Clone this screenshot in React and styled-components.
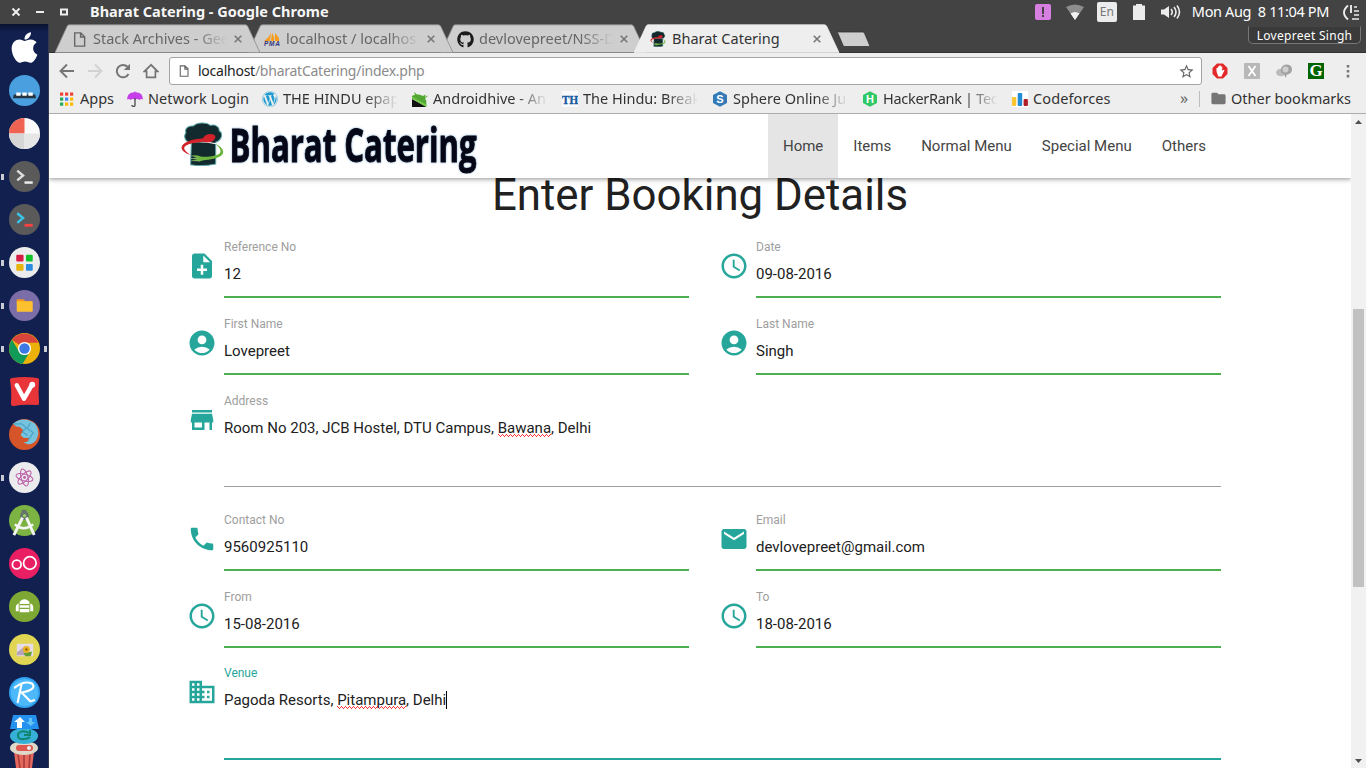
import React from 'react';
import styled, { createGlobalStyle, css } from 'styled-components';
import { MdNoteAdd, MdAccessTime, MdAccountCircle, MdStore, MdPhone, MdEmail, MdBusiness, MdStarBorder, MdFolder } from 'react-icons/md';
import { FaApple, FaWordpress, FaGithub } from 'react-icons/fa';

const GlobalStyle = createGlobalStyle`
  * { box-sizing: border-box; }
  html, body { margin: 0; height: 100%; overflow: hidden; }
  body { font-family: "Noto Sans", "Open Sans", sans-serif; background: #fff; }
  #root { height: 768px; }
  svg { display: block; flex: none; }
`;

const Desktop = styled.div`
  width: 1366px; height: 768px; overflow: hidden;
  display: flex; flex-direction: column;
`;
const Label = styled.span`
  white-space: pre;
  letter-spacing: ${p => p.$ls || 0}px;
`;

/* ---------- top panel ---------- */
const Panel = styled.header`
  height: 24px; flex: none; background: #434343; color: #fff;
  display: flex; align-items: center; justify-content: space-between;
  padding: 0 6px 0 11px; font-size: 14.5px;
`;
const PanelSide = styled.div`display: flex; align-items: center; height: 24px;`;
const WindowTitle = styled(Label)`font-weight: 700; margin: -2px 0 0 21px; font-size: 14.5px; line-height: 24px; color: #f6f6f6;`;
const LangBadge = styled.span`
  width: 20px; height: 20px; border-radius: 2px; background: #ececec; color: #777;
  font-size: 12px; line-height: 20px; text-align: center; margin: 0 16px 0 13px;
`;
const Clock = styled(Label)`margin: -2px 14px 0 11px; line-height: 24px;`;

/* ---------- launcher ---------- */
const Workspace = styled.div`flex: 1; min-height: 0; display: flex;`;
const Launcher = styled.nav`
  width: 49px; flex: none; padding-top: 2px; border-right: 1px solid #33374f;
  background: linear-gradient(#0a1230 0, #11204f 8px, #11204f 100%);
  display: flex; flex-direction: column;
`;
const LauncherItem = styled.div`
  height: 43px; flex: none; display: flex; align-items: center;
  padding-left: 1px;
`;
const Pip = styled.i`
  width: 3px; height: 6px; margin-right: 5px;
  background: ${p => (p.$on ? '#c9cbd3' : 'transparent')};
  & + svg + & { margin: 0 0 0 4px; }
`;
const Stack = styled.div`padding: 0 0 0 9px;`;

/* ---------- browser ---------- */
const Browser = styled.main`flex: 1; min-width: 0; display: flex; flex-direction: column;`;
const TabStrip = styled.div`
  height: 29px; flex: none; background: #434343; display: flex; padding-left: 6px;
  box-shadow: inset 0 -1px #333;
`;
const TabBox = styled.div`
  width: 206px; height: 29px; flex: none; margin-right: -13px;
  display: grid; grid-template-columns: 206px; position: relative;
  z-index: ${p => (p.$active ? 5 : p.$z)};
  & > * { grid-area: 1 / 1; }
`;
const TabContent = styled.div`
  display: flex; align-items: center; padding: 1px 16px 0 15px; gap: 5px; font-size: 14.5px;
  color: ${p => (p.$active ? '#333' : '#666')};
`;
const IconSlot = styled.span`width: 18px; display: flex; justify-content: center; flex: none;`;
const fade = css`
  mask-image: linear-gradient(to right, #000 calc(100% - 32px), transparent);
`;
const TabTitle = styled(Label)`
  width: 134px; margin: -2px 2px 0 0; overflow: hidden; line-height: 26px;
  ${p => !p.$active && fade}
`;
const UserBadge = styled.div`
  width: 113px; height: 18px; margin: 2px 5px 0 auto; border: 1px solid #777; border-top-color: #444;
  border-radius: 0 0 5px 5px; background: #3a3a3a; color: #fff; font-size: 12px; letter-spacing: .3px; line-height: 17px; text-align: center; white-space: nowrap;
`;
const NewTab = styled.div`margin: 7px 0 0 8px;`;

const Toolbar = styled.div`
  height: 35px; flex: none; background: #eee; display: flex; align-items: center; padding: 1px 10px 0 10px;
`;
const ToolbarIcons = styled.div`display: flex; gap: 12px; align-items: center; width: 110px;`;
const AddressBar = styled.div`
  width: 1033px; height: 28px; background: #fff; border: 1px solid #a3a3a3; border-radius: 3px; flex: none;
  display: flex; align-items: center; padding: 0 6px 0 9px; font-size: 14px; color: #222;
`;
const Url = styled(Label)`margin: -2px 0 0 9px; flex: 1; span { color: #8b8b8b; }`;
const Extensions = styled.div`display: flex; align-items: center; margin-left: 10px; gap: 16px; flex: 1;`;
const GreenG = styled.span`
  width: 16px; height: 16px; background: #006400; color: #fff; font: 700 17px/16px "Liberation Serif", serif; text-align: center; overflow: hidden;
`;

const BookmarksBar = styled.div`
  height: 26px; flex: none; background: #eee; border-bottom: 1px solid #acacac;
  display: flex; align-items: center; padding: 0 15px 4px 10px; font-size: 14.5px; color: #333;
`;
const Bookmark = styled.div`
  width: ${p => p.$w}px; flex: none; display: flex; align-items: center; gap: 5px; overflow: hidden; height: 22px;
`;
const BookmarkText = styled(Label)`
  line-height: 22px; margin-top: -2px; overflow: hidden; max-width: 116px;
  ${p => p.$cut && css`width: 115px; ${fade}`}
`;
const OtherMarks = styled.div`
  margin-left: auto; display: flex; align-items: center; height: 16px; border-left: 1px solid #bdbdbd; padding-left: 10px; gap: 4px;
  & > span { margin-top: -2px; }
`;
const Chevrons = styled.span`font-size: 16px; line-height: 18px; color: #666; margin: -2px 0 0 2px;`;

/* ---------- web page ---------- */
const Viewport = styled.div`flex: 1; min-height: 0; display: flex;`;
const Page = styled.div`
  flex: 1; background: #fff; overflow: hidden; font-family: Roboto, sans-serif; color: #212121;
  display: flex; flex-direction: column;
`;
const NavBar = styled.div`
  height: 64px; flex: none; padding: 0 130px 0 132px; background: #fff; display: flex; justify-content: space-between;
  box-shadow: 0 2px 5px rgba(0,0,0,.22), 0 1px 3px rgba(0,0,0,.18); position: relative; z-index: 2;
`;
const Brand = styled.div`display: flex; align-items: flex-start; padding-top: 8px;`;
const Wordmark = styled.text`
  font: 700 46px "Open Sans", sans-serif; fill: #050716; stroke: #050716; stroke-width: .9px;
  filter: drop-shadow(0 0 .8px #7fa9cc);
`;
const Menu = styled.div`display: flex; font-size: 15px; line-height: 64px; color: #444;`;
const MenuItem = styled.a`padding: 0 15px; background: ${p => (p.$active ? '#e5e5e5' : 'none')};`;
const Heading = styled.h3`
  margin: -12px 0 0; font-size: 43.8px; font-weight: 400; line-height: 58px; height: 72px; text-align: center; flex: none;
`;
const Form = styled.form`padding: 0 130px 0 138px;`;
const FormRow = styled.div`display: flex; gap: 30px; height: ${p => p.$h}px;`;
const Field = styled.div`flex: 1; display: flex; color: #26a69a; padding-top: 13px; svg { margin-right: 7px; }`;
const FieldBody = styled.div`
  flex: 1; height: ${p => p.$h}px; margin-top: -11px; display: flex; flex-direction: column;
  border-bottom: ${p => (p.$line)};
`;
const FieldLabel = styled.label`font-size: 12px; line-height: 14px; color: ${p => (p.$focus ? '#26a69a' : '#9e9e9e')};`;
const FieldValue = styled.div`font-size: 15px; line-height: 20px; margin-top: 10px; color: #212121; display: flex; white-space: pre;`;
const Misspelt = styled.span`
  background:
    linear-gradient(90deg, #f33 1px, transparent 1px) 0 16px / 4px 1px repeat-x,
    linear-gradient(90deg, transparent 1px, #f33 1px 2px, transparent 2px 3px, #f33 3px) 0 17px / 4px 1px repeat-x,
    linear-gradient(90deg, transparent 2px, #f33 2px 3px, transparent 3px) 0 18px / 4px 1px repeat-x;
`;
const Caret = styled.i`width: 1px; height: 18px; background: #000; margin-top: 1px;`;

const ScrollTrack = styled.div`
  width: 15px; background: #f1f1f1; display: flex; flex-direction: column; align-items: center; justify-content: space-between;
  padding: 6px 0 5px;
`;
const ScrollThumb = styled.div`width: 11px; height: 278px; background: #c1c1c1;`;
const ThumbArea = styled.div`flex: 1; padding-top: 185px;`;

const ChefHat = ({ w, h }) => (
  <svg width={w} height={h} viewBox="36 28 126 130">
    <path d="M66 90C48 88 42 70 50 60 46 48 56 38 72 40 82 28 112 28 122 38 138 34 150 44 148 54 160 60 158 80 138 88L138 152Q100 160 64 154Z" fill="#12292d" stroke="#5aa5a5" strokeWidth="3" />
    <path d="M62 88Q100 84 140 92" fill="none" stroke="#fff" strokeWidth="3" />
    <path d="M137 70C132 60 108 60 100 76 70 78 38 88 37 104 38 114 52 122 66 126 52 118 44 110 45 103 50 92 76 88 102 86 118 92 138 84 137 70Z" fill="#d3222a" />
    <path d="M138 94C156 100 168 116 154 128 138 140 112 138 92 144L66 142 84 137 64 136 84 132 66 128Q80 124 94 130C118 132 142 128 150 120 156 112 148 102 138 94Z" fill="#6db33f" />
    <path d="M66 128 84 132M64 136H84M66 142 92 144" stroke="#d6efc4" strokeWidth="1" />
  </svg>
);

const Glyph = ({ w = 16, h = 16, box = '0 0 16 16', children }) => <svg width={w} height={h} viewBox={box}>{children}</svg>;
const PageIcon = ({ w = 12, h = 14 }) => (
  <Glyph w={w} h={h} box="0 0 12 14"><path d="M1.5.8h5.700l3.600 3.600v8.800H1.500ZM7 1v3.700h3.700" fill="none" stroke="#666" strokeWidth="1.3" /></Glyph>
);
const PmaIcon = () => (
  <Glyph w={18} h={16} box="0 0 18 16">
    <path d="M8 1 7 10H1Q7 6 8 1Zm1 1q3 4 2 8H8Zm3 0q5 5 4 8h-4Z" fill="#f89c1c" />
    <text x="1" y="15" fontSize="6.5" fontWeight="700" fontStyle="italic" fontFamily="Liberation Sans" fill="#35357a" textLength="16">PMA</text>
  </Glyph>
);

const tabs = [
  { title: 'Stack Archives - Gee', icon: <PageIcon w={13} h={15} /> },
  { title: 'localhost / localhos', icon: <PmaIcon /> },
  { title: 'devlovepreet/NSS-D', icon: <FaGithub size={17} color="#1b1b1b" /> },
  { title: 'Bharat Catering', icon: <ChefHat w={16} h={16} />, active: true },
];

const Tab = ({ tab, index }) => (
  <TabBox $active={tab.active} $z={4 - index}>
    <Glyph w={206} h={29} box="0 0 206 29">
      <path d="M0 28.600 12 2.500Q12.800 .8 14 .8H190.500Q192 .8 192.800 2.500L205 28.600Z" fill={tab.active ? '#eee' : '#cecece'} stroke={tab.active ? '#eee' : '#8b8b8b'} strokeWidth=".8" />
    </Glyph>
    <TabContent $active={tab.active}>
      <IconSlot>{tab.icon}</IconSlot>
      <TabTitle $active={tab.active}>{tab.title}</TabTitle>
      <Glyph w={8} h={8} box="0 0 8 8"><path d="M.7.7 7.300 7.300M7.300.7.7 7.300" stroke="#777" strokeWidth="1.6" /></Glyph>
    </TabContent>
  </TabBox>
);

const Hex = ({ color, letter }) => (
  <Glyph>
    <path d="M8 .3 15 4v8L8 15.7 1 12V4Z" fill={color} />
    <text x="8" y="12" fontSize="11" fontWeight="700" textAnchor="middle" fill="#fff" fontFamily="Liberation Sans">{letter}</text>
  </Glyph>
);
const appColors = ['#e43', '#e43', '#e43', '#2a5', '#48e', '#fb0', '#2a5', '#fb0', '#fb0'];
const bookmarks = [
  { w: 68, text: 'Apps', icon: <Glyph>{appColors.map((c, i) => <rect key={i} x={1 + (i % 3) * 5} y={1.5 + Math.floor(i / 3) * 5} width="3.2" height="3.2" fill={c} />)}</Glyph> },
  { w: 135, text: 'Network Login', ls: 0.08, icon: <Glyph><path d="M0 8.500Q0 1.500 7.300 1.300L8 0l.7 1.300Q16 1.500 16 8.500 14.500 7.300 12.500 9 10 7 8 9 6 7 3.500 9 1.500 7.300 0 8.500Z" fill="#c63ee8" /><path d="M8 7v7q0 1.500-1.500 1.500T5 14" fill="none" stroke="#555" strokeWidth="1.400" /></Glyph> },
  { w: 150, text: 'THE HINDU epap', cut: true, icon: <FaWordpress size={16} color="#1c9bd0" /> },
  { w: 150, text: 'Androidhive - An', cut: true, icon: <Glyph><path d="M0 5Q1 4 3 4L2 1l3 2.500Q8 3 11 5l2.500-1.500L13 7q2 3 1.500 7L0 6Z" fill="#52a832" /><path d="M0 8v8h14.500Z" fill="#111" /><path d="m0 6.500 14.500 8.500" stroke="#6bc73e" strokeWidth="2" /><path d="M15.500 5l-3 2" stroke="#52a832" /></Glyph> },
  { w: 150, text: 'The Hindu: Break', cut: true, icon: <Glyph><rect width="16" height="16" fill="#fafafa" /><text x="0" y="12.500" fontSize="13" fontWeight="700" textLength="16" lengthAdjust="spacingAndGlyphs" fill="#1659a0" stroke="#1659a0" strokeWidth=".4" fontFamily="Liberation Serif">TH</text></Glyph> },
  { w: 150, text: 'Sphere Online Ju', cut: true, icon: <Hex color="#337ab7" letter="S" /> },
  { w: 150, text: 'HackerRank | Tec', ls: -0.3, cut: true, icon: <Hex color="#2ec866" letter="H" /> },
  { w: 166, text: 'Codeforces', ls: 0.1, icon: <Glyph><rect width="16" height="16" fill="#fff" /><rect y="6" width="4.300" height="9" rx="1" fill="#fbc531" /><rect x="5.700" y="2" width="4.500" height="13" rx="1" fill="#1f8dd6" /><rect x="11.600" y="8" width="4.300" height="7" rx="1" fill="#b01e28" /></Glyph> },
];

const Disc = ({ fill, children }) => (
  <Glyph w={31} h={31} box="0 0 32 32"><circle cx="16" cy="16" r="16" fill={fill} />{children}</Glyph>
);
const launcherIcons = [
  { icon: <Glyph w={31} h={31} box="0 0 31 31"><FaApple x={-2} y={-2} size={35} color="#fff" /></Glyph> },
  { icon: <Disc fill="#4aa0de"><path d="M5 20h22l1 4H4Z" fill="#263442" /><path d="M7.500 18h4.500v3.500H7.500ZM13.800 18h4.500v3.500h-4.500ZM20 18h4.500v3.500H20Z" fill="#fff" /></Disc> },
  { icon: <Disc fill="#fafafa"><path d="M16 16V0A16 16 0 0 0 0 16Z" fill="#ee6352" /><path d="M16 16v16A16 16 0 0 1 0 16Z" fill="#d6d6d6" /><path d="M16 16v16a16 16 0 0 0 16-16Z" fill="#e6e6e6" /></Disc> },
  { on: true, icon: <Disc fill="#5a5a5a"><path d="m8.500 10 6 5-6 5" fill="none" stroke="#ddd" strokeWidth="2.500" /><path d="M16 21h8.500v2.500H16Z" fill="#eee" /></Disc> },
  { icon: <Disc fill="#5a5a5a"><path d="m8.500 9.500 6 5-6 5" fill="none" stroke="#3cc4e8" strokeWidth="2.500" /><path d="M16 20.500h8.500v3H16Z" fill="#f44141" /></Disc> },
  { on: true, icon: <Disc fill="#ececec"><rect x="7.500" y="8" width="7.500" height="7" rx="1" fill="#d81b43" /><rect x="17.500" y="8" width="7" height="7" rx="1" fill="#12c22b" /><rect x="7.500" y="17.500" width="7.500" height="7" rx="1" fill="#e5b50b" /><rect x="17.500" y="17.500" width="7" height="7" rx="1" fill="#2a8ce0" /></Disc> },
  { on: true, icon: <Disc fill="#7b6da8"><path d="M8 9.500h7l2 2h6.500V14H8Z" fill="#f8961e" /><rect x="8" y="11.500" width="16.500" height="11" rx="1" fill="#fdc12f" /></Disc> },
  { on: true, right: true, icon: <Disc fill="#ecb20a"><path d="M16 16 3 7A16 16 0 0 1 30.500 10H16Z" fill="#d9453a" /><path d="M3 7l8 13 9 2-6 10A16 16 0 0 1 3 7Z" fill="#129a58" /><circle cx="16" cy="16" r="6.800" fill="#fff" /><circle cx="16" cy="16" r="5.400" fill="#3c79e6" /></Disc> },
  { icon: <Glyph w={31} h={31} box="0 0 32 32"><path d="M3 2Q16 0 29 2 31 2 31 4 30 16 31 28q0 2-2 2-14-1-24 1-3 0-3-3Q3 15 1 4 1 2 3 2Z" fill="#e83539" /><path d="m8 9.500 7.500 14 8-14" fill="none" stroke="#fff" strokeWidth="4.500" strokeLinecap="round" strokeLinejoin="round" /><circle cx="24" cy="9" r="3" fill="#fff" /></Glyph> },
  { icon: <Disc fill="#d5542a"><path d="M4 5Q15-4 27 5 33 13 28 22 22 29 15 24 22 24 20 19 14 21 12 16L15 12Q11 7 8 8Z" fill="#75c3dc" /><path d="M5 5 13 5 18 9 14 13 19 17M22 4 19 10 25 14 20 22" fill="none" stroke="#4ba3c9" strokeWidth="1.200" /></Disc> },
  { on: true, icon: <Disc fill="#ececef"><g fill="none" stroke="#bc62a8" strokeWidth="1.100"><ellipse cx="16" cy="16" rx="9" ry="3.500" transform="rotate(15 16 16)" /><ellipse cx="16" cy="16" rx="9" ry="3.500" transform="rotate(75 16 16)" /><ellipse cx="16" cy="16" rx="9" ry="3.500" transform="rotate(135 16 16)" /></g><circle cx="16" cy="16" r="1.500" fill="#bc62a8" /></Disc> },
  { icon: <Disc fill="#7cb342"><path d="M13 5h5v3h-5Z" fill="#66756c" /><circle cx="16" cy="11" r="4.500" fill="#66756c" /><circle cx="16" cy="11" r="1.700" fill="#9ccc65" /><path d="M14 13 5 31M18 13l8 18" stroke="#f5f5f5" strokeWidth="3" /><path d="M6 20q9 8 19 0" fill="none" stroke="#f5f5f5" strokeWidth="2.500" /></Disc> },
  { icon: <Disc fill="#e91e63"><circle cx="8" cy="17" r="4.500" fill="none" stroke="#fff" strokeWidth="1.800" /><circle cx="21.500" cy="15.500" r="6.500" fill="none" stroke="#fff" strokeWidth="1.800" /></Disc> },
  { icon: <Disc fill="#7da834"><path d="M11 11q5-5 10 0v11H11Z" fill="#fff" /><path d="M10 13q-3 1-3 4v4h3ZM22 13q3 1 3 4v4h-3Z" fill="#fff" /><path d="M11 14h10M11 18h10" stroke="#7da834" strokeWidth="1.400" /></Disc> },
  { icon: <Disc fill="#e0d653"><rect x="8" y="10" width="17" height="13" rx="1" fill="#e6dce7" /><path d="m8 19 8-6 8 9H8Z" fill="#b8a4b8" /><path d="m15 20 9-2-2 5h-5Z" fill="#60a033" /><circle cx="18" cy="16" r="3.600" fill="#e9b51d" /><circle cx="18" cy="16" r="1.400" fill="#a25e11" /></Disc> },
  { icon: <Disc fill="#31a2f0"><circle cx="16" cy="16" r="14" fill="#4db8fa" /><path d="M13 7 9 26M6 11Q16 3 24 7 29 13 13 16L22 25 26 24" fill="none" stroke="#fff" strokeWidth="2.200" strokeLinecap="round" /></Disc> },
];

const Menus = ['Home', 'Items', 'Normal Menu', 'Special Menu', 'Others'];
const GREEN = '2px solid #4caf50';
const rows = [
  { h: 77, fields: [{ icon: MdNoteAdd, label: 'Reference No', value: '12' }, { icon: MdAccessTime, label: 'Date', value: '09-08-2016' }] },
  { h: 77, fields: [{ icon: MdAccountCircle, label: 'First Name', value: 'Lovepreet' }, { icon: MdAccountCircle, label: 'Last Name', value: 'Singh' }] },
  { h: 119, body: 93, line: '1px solid #9e9e9e', fields: [{ icon: MdStore, label: 'Address', value: <>Room No 203, JCB Hostel, DTU Campus, <Misspelt>Bawana</Misspelt>, Delhi</> }] },
  { h: 77, fields: [{ icon: MdPhone, label: 'Contact No', value: '9560925110' }, { icon: MdEmail, label: 'Email', value: 'devlovepreet@gmail.com' }] },
  { h: 76, fields: [{ icon: MdAccessTime, label: 'From', value: '15-08-2016' }, { icon: MdAccessTime, label: 'To', value: '18-08-2016' }] },
  { h: 110, body: 94, line: '2px solid #26a69a', fields: [{ icon: MdBusiness, label: 'Venue', focus: true, value: <>Pagoda Resorts, <Misspelt>Pitampura</Misspelt>, Delhi<Caret /></> }] },
];

export default function App() {
  return (
    <Desktop>
      <GlobalStyle />
      <Panel>
        <PanelSide>
          <Glyph w={58} h={12} box="0 0 58 12">
            <path d="M1.500 2.500 8.500 9.500M8.500 2.500 1.500 9.500" stroke="#eee" strokeWidth="2" />
            <path d="M25 6h8" stroke="#eee" strokeWidth="2" /><path d="M50 3.500h6v5h-6Z" fill="none" stroke="#eee" strokeWidth="2" />
          </Glyph>
          <WindowTitle>Bharat Catering - Google Chrome</WindowTitle>
        </PanelSide>
        <PanelSide>
          <Glyph><rect width="16" height="16" rx="2" fill="#d77fe0" /><path d="M7 3h2v7H7ZM7 11h2v2H7Z" fill="#444" /></Glyph>
          <Glyph w={33} h={18} box="0 0 33 18"><path d="M15 4Q24-1 33 4L24 17Z" fill="#8d8d8d" /><path d="M19.500 10.500q4.500-3 9 0L24 17Z" fill="#f3f3f3" /></Glyph>
          <LangBadge>En</LangBadge>
          <Glyph w={12} h={16} box="0 0 12 16"><path d="M0 1.500h3V0h6v1.500h3V16H0Z" fill="#ececec" /></Glyph>
          <Glyph w={36} h={16} box="0 0 36 16"><path d="M16 5.500h3L24 2v12l-5-3.500h-3Z" fill="#ececec" /><path d="M26 5q2.500 3 0 6M29 3q4 5 0 10M32 1.500q5 6.500 0 13" fill="none" stroke="#ececec" strokeWidth="1.600" /></Glyph>
          <Clock $ls={-0.37}>Mon Aug  8 11:04 PM</Clock>
          <Glyph w={17} h={17} box="0 0 17 17"><path d="M5 1.500Q-3 8.500 5 15.500M8 1v8" fill="none" stroke="#ececec" strokeWidth="1.900" /><path d="M11 3h3M11 7h5M11 11h5M9 15h7" stroke="#ececec" strokeWidth="1.700" /></Glyph>
        </PanelSide>
      </Panel>
      <Workspace>
        <Launcher>
          {launcherIcons.map((it, i) => (
            <LauncherItem key={i}><Pip $on={it.on} />{it.icon}<Pip $on={it.right} /></LauncherItem>
          ))}
          <Stack>
            <Glyph w={31} h={54} box="0 0 31 54">
              <path d="M5 38h20l-2 16H7Z" fill="#e5685f" /><path d="M9 40l2 14M15 40v14M21 40l-1 14" stroke="#a43b38" strokeWidth="1.500" />
              <ellipse cx="15" cy="34" rx="14" ry="7" fill="#ddd8ca" /><rect x="7" y="31" width="17" height="6" rx="3" fill="#df584f" /><circle cx="20" cy="34" r="2" fill="#eee" />
              <ellipse cx="15" cy="22" rx="14" ry="8" fill="#35b1d8" /><path d="M20 19q-7-4-11 1-1 6 6 5 4 0 6-2M21 16v5h-6" fill="none" stroke="#12856e" strokeWidth="2" />
              <path d="M4 1h23l3 14H1Z" fill="#2591ee" /><path d="m11 3 5 5h-3v6H8V8H5Z" fill="#fff" /><path d="M20 4h3v4h3l-4 4-5-4h3Z" fill="#64c2f7" />
            </Glyph>
          </Stack>
        </Launcher>
        <Browser>
          <TabStrip>
            {tabs.map((t, i) => <Tab key={t.title} tab={t} index={i} />)}
            <NewTab><Glyph w={36} h={17} box="0 0 36 17"><path d="M2.500 1h25q1.500 0 2 1.200L34.500 14q.5 1.500-1 1.500H10q-1.500 0-2-1.200L3 2.500Q2 1 2.500 1Z" fill="#cecece" stroke="#333" strokeWidth=".8" /></Glyph></NewTab>
            <UserBadge>Lovepreet Singh</UserBadge>
          </TabStrip>
          <Toolbar>
            <ToolbarIcons>
              <Glyph><path d="M15 8H2M8 1.500 1.500 8 8 14.500" fill="none" stroke="#757575" strokeWidth="1.900" /></Glyph>
              <Glyph><path d="M1 8h13M8 1.500 14.500 8 8 14.500" fill="none" stroke="#d2d2d2" strokeWidth="1.900" /></Glyph>
              <Glyph><path d="M13.500 11A6.200 6.200 0 1 1 12.500 3.800" fill="none" stroke="#757575" strokeWidth="2" /><path d="M15 .8V7H8.800Z" fill="#757575" /></Glyph>
              <Glyph><path d="M8 1.800 1.500 8.300H3.600V14.300H12.400V8.300H14.500Z" fill="none" stroke="#757575" strokeWidth="1.700" /></Glyph>
            </ToolbarIcons>
            <AddressBar>
              <PageIcon w={10} h={12} />
              <Url $ls={-0.25}>localhost<span>/bharatCatering/index.php</span></Url>
              <MdStarBorder size={17} color="#666" />
            </AddressBar>
            <Extensions>
              <Glyph><path d="M5 .5h6L15.500 5v6L11 15.500H5L.5 11V5Z" fill="#e22a2a" /><path d="M4.500 8.500V5h1.300V3.500h1.400V2.500h1.600v1h1.400v4.500l1.300-1.200 1 .8L10.500 11 9.500 13.500H6.300Z" fill="#fff" /></Glyph>
              <Glyph><rect width="16" height="16" rx="1" fill="#b8b8b8" /><path d="m4.500 3 7 10M11.500 3l-7 10" stroke="#fff" strokeWidth="1.800" /></Glyph>
              <Glyph><ellipse cx="5" cy="9.500" rx="5" ry="3.800" fill="#bcbcbc" /><path d="M5 6q1-4.500 6-4.500 5 .5 5 5-.5 4.500-5 5l-1.500 3.500-1-3.500Q4 10 5 6Z" fill="#a2a2a2" /><circle cx="9.500" cy="6.500" r="3" fill="#cfcfcf" /></Glyph>
              <GreenG>G</GreenG>
              <Glyph><path d="M6.700 2h2.600v2.600H6.700ZM6.700 6.900h2.600v2.600H6.700ZM6.700 11.800h2.600v2.600H6.700Z" fill="#777" /></Glyph>
            </Extensions>
          </Toolbar>
          <BookmarksBar>
            {bookmarks.map(b => (
              <Bookmark key={b.text} $w={b.w}>{b.icon}<BookmarkText $cut={b.cut} $ls={b.ls}>{b.text}</BookmarkText></Bookmark>
            ))}
            <Chevrons>»</Chevrons>
            <OtherMarks><MdFolder size={17} color="#757575" /><Label>Other bookmarks</Label></OtherMarks>
          </BookmarksBar>
          <Viewport>
            <Page>
              <NavBar>
                <Brand>
                  <ChefHat w={43} h={44} />
                  <Glyph w={257} h={52} box="43 8 257 52">
                    <Wordmark x="48.5" y="47.500" textLength="247" lengthAdjust="spacingAndGlyphs">Bharat Catering</Wordmark>
                  </Glyph>
                </Brand>
                <Menu>{Menus.map(m => <MenuItem key={m} $active={m === 'Home'}>{m}</MenuItem>)}</Menu>
              </NavBar>
              <Heading>Enter Booking Details</Heading>
              <Form>
                {rows.map((r, i) => (
                  <FormRow key={i} $h={r.h}>
                    {r.fields.map(f => (
                      <Field key={f.label}>
                        <f.icon size={30} />
                        <FieldBody $h={r.body || 58} $line={r.line || GREEN}>
                          <FieldLabel $focus={f.focus}>{f.label}</FieldLabel>
                          <FieldValue>{f.value}</FieldValue>
                        </FieldBody>
                      </Field>
                    ))}
                  </FormRow>
                ))}
              </Form>
            </Page>
            <ScrollTrack>
              <Glyph w={7} h={4} box="0 0 7 4"><path d="M0 4 3.500 0 7 4Z" fill="#505050" /></Glyph>
              <ThumbArea><ScrollThumb /></ThumbArea>
              <Glyph w={7} h={4} box="0 0 7 4"><path d="M0 0 3.500 4 7 0Z" fill="#505050" /></Glyph>
            </ScrollTrack>
          </Viewport>
        </Browser>
      </Workspace>
    </Desktop>
  );
}
